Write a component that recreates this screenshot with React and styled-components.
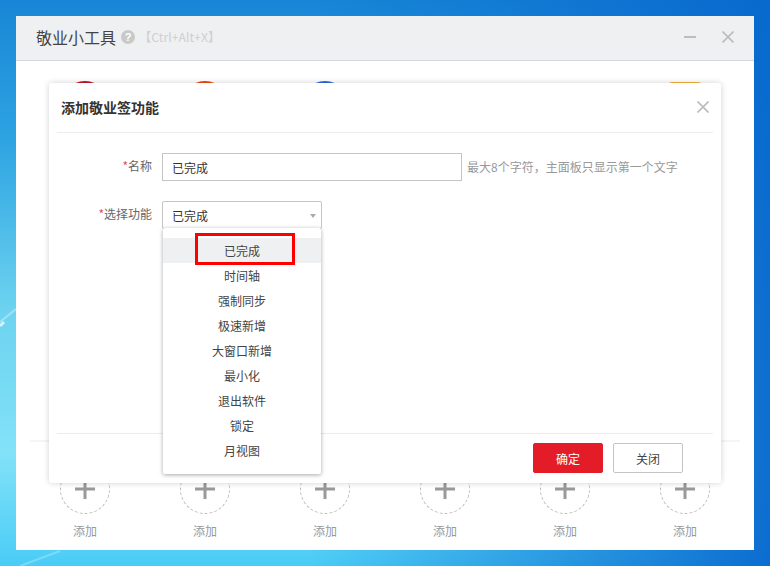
import styled, { createGlobalStyle } from "styled-components";

const GlobalStyle = createGlobalStyle`
  html, body {
    margin: 0;
    padding: 0;
    height: 100%;
    overflow: hidden;
  }
  body {
    font-family: "Noto Sans CJK SC", "Liberation Sans", sans-serif;
    font-size: 12px;
  }
`;

const Desktop = styled.div`
  position: relative;
  width: 770px;
  height: 566px;
  padding: 16px 0 0 16px;
  box-sizing: border-box;
  overflow: hidden;
  background:
    linear-gradient(90deg, rgba(10, 100, 200, 0) 0%, rgba(8, 104, 200, 0) 40%, rgba(8, 104, 206, 0.95) 100%),
    linear-gradient(180deg, #1886d6 0%, #2ea4e2 25%, #6dd3f0 55%, #82e2f8 80%, #4accf6 100%);
`;

const Streaks = styled.svg`
  position: absolute;
  left: 0;
  top: 0;
`;

const Window = styled.div`
  position: relative;
  width: 738px;
  height: 534px;
  display: flex;
  flex-direction: column;
  background: #fff;
`;

const TitleBar = styled.div`
  height: 45px;
  flex: none;
  box-sizing: border-box;
  display: flex;
  align-items: center;
  padding: 0 20px 2px;
  background: #eff0f2;
  border-bottom: 1px solid #d6d6dc;
`;

const AppTitle = styled.span`
  font-size: 16px;
  color: #444;
`;

const Help = styled.span`
  width: 14px;
  height: 14px;
  margin-left: 5px;
  border-radius: 50%;
  background: #c9c9c9;
  color: #fff;
  font-size: 11px;
  font-weight: 700;
  line-height: 14px;
  text-align: center;
  font-family: "Liberation Sans", sans-serif;
`;

const Shortcut = styled.span`
  margin-left: 4px;
  font-size: 12.3px;
  color: #cfcfcf;
`;

const WinControls = styled.div`
  margin-left: auto;
  display: flex;
  align-items: center;
  gap: 26px;
`;

const WinBody = styled.div`
  flex: 1;
  display: flex;
  flex-direction: column;
  padding-top: 20px;
`;

const SlotRow = styled.div`
  display: grid;
  grid-template-columns: repeat(6, 120px);
  padding-left: 9px;
`;

const ToolDot = styled.div`
  justify-self: center;
  width: ${(p) => p.$w || 50}px;
  height: 50px;
  margin-top: ${(p) => p.$top || 0}px;
  border-radius: ${(p) => p.$radius || "50%"};
  background: ${(p) => p.$color};
`;

const Rule = styled.div`
  margin: auto 14px 0;
  height: 2px;
  background: #f5f5f5;
`;

const AddSlots = styled(SlotRow)`
  padding-top: 22px;
  height: 86px;
  box-sizing: content-box;
`;

const AddSlot = styled.div`
  display: flex;
  flex-direction: column;
  align-items: center;
  gap: 9px;
`;

const AddCircle = styled.div`
  width: 50px;
  height: 50px;
  box-sizing: border-box;
  border-radius: 50%;
  border: 1px dashed #b9b9b9;
  display: flex;
  align-items: center;
  justify-content: center;
`;

const AddLabel = styled.span`
  font-size: 12px;
  line-height: 16px;
  color: #999;
`;

const Dialog = styled.div`
  position: absolute;
  left: 33px;
  top: 67px;
  width: 672px;
  height: 400px;
  box-sizing: border-box;
  padding: 0 8px;
  display: flex;
  flex-direction: column;
  background: #fff;
  border-radius: 3px;
  box-shadow: 0 0 6px rgba(0, 0, 0, 0.18);
`;

const DialogHead = styled.div`
  height: 50px;
  flex: none;
  box-sizing: border-box;
  padding: 0 4px 1px 4px;
  display: flex;
  align-items: center;
  justify-content: space-between;
  border-bottom: 1px solid #ececec;
`;

const DialogTitle = styled.h2`
  margin: 0;
  font-size: 14px;
  font-weight: 700;
  color: #333;
`;

const Form = styled.div`
  flex: 1;
  padding-top: 20px;
  display: flex;
  flex-direction: column;
  gap: 20px;
`;

const FormRow = styled.div`
  display: flex;
  align-items: flex-start;
`;

const Label = styled.label`
  width: 95px;
  flex: none;
  margin-right: 10px;
  text-align: right;
  font-size: 12px;
  line-height: 28px;
  color: #666;
  transform: translateY(-1px);

  i {
    font-style: normal;
    color: #d9534f;
  }
`;

const TextInput = styled.div`
  width: 300px;
  height: 28px;
  box-sizing: border-box;
  padding: 0 9px;
  border: 1px solid #c4c4c4;
  font-size: 12px;
  line-height: 27px;
  color: #333;
`;

const Hint = styled.span`
  margin-left: 5px;
  font-size: 12px;
  line-height: 28px;
  color: #999;
`;

const SelectWrap = styled.div`
  position: relative;
  width: 160px;
`;

const SelectBox = styled(TextInput)`
  width: 160px;
  border-radius: 2px;
  position: relative;

  &::after {
    content: "";
    position: absolute;
    right: 5px;
    top: 12px;
    border-left: 3px solid transparent;
    border-right: 3px solid transparent;
    border-top: 4px solid #aaa;
  }
`;

const Menu = styled.div`
  position: absolute;
  left: 1px;
  top: 27px;
  width: 158px;
  height: 246px;
  box-sizing: border-box;
  padding-top: 10px;
  background: #fff;
  border-radius: 2px;
  box-shadow: 0 1px 4px rgba(0, 0, 0, 0.35);
  z-index: 2;
`;

const MenuItem = styled.div`
  position: relative;
  height: 25px;
  line-height: 25px;
  text-align: center;
  font-size: 12px;
  color: #444;
  background: ${(p) => (p.$active ? "#eff0f2" : "transparent")};
`;

const Highlight = styled.div`
  position: absolute;
  left: 32px;
  top: -5px;
  width: 100px;
  height: 32px;
  box-sizing: border-box;
  border: 3px solid #f00;
`;

const DialogFoot = styled.div`
  height: 50px;
  flex: none;
  box-sizing: border-box;
  padding: 9px 30px 0 0;
  display: flex;
  justify-content: flex-end;
  align-items: flex-start;
  gap: 10px;
  border-top: 1px solid #ececec;
`;

const Button = styled.button`
  width: 70px;
  height: 30px;
  padding: 0;
  box-sizing: border-box;
  border-radius: 2px;
  font-family: inherit;
  font-size: 12px;
  border: 1px solid ${(p) => (p.$primary ? "#e41c27" : "#c4c4c4")};
  background: ${(p) => (p.$primary ? "#e41c27" : "#fff")};
  color: ${(p) => (p.$primary ? "#fff" : "#444")};
`;

const CrossIcon = ({ size = 12, color = "#bdbdbd" }) => (
  <svg width={size} height={size} viewBox="0 0 12 12" style={{ display: "block" }}>
    <path d="M0.5 0.5 L11.5 11.5 M11.5 0.5 L0.5 11.5" stroke={color} strokeWidth="1.7" fill="none" />
  </svg>
);

const MinusIcon = () => (
  <svg width="12" height="12" viewBox="0 0 12 12" style={{ display: "block" }}>
    <rect x="0" y="5" width="12" height="2" fill="#bdbdbd" />
  </svg>
);

const PlusIcon = () => (
  <svg width="20" height="20" viewBox="0 0 20 20" style={{ display: "block" }}>
    <path d="M0 8.5 H20 V11.5 H0 Z M8.5 0 H11.5 V20 H8.5 Z" fill="#999" />
  </svg>
);

const tools = [
  { color: "#c8142c" },
  { color: "#ef4a06" },
  { color: "#2b6be6" },
  { color: "transparent" },
  { color: "transparent" },
  { color: "#f6b437", w: 38, radius: "6px", top: 1 },
];

const options = ["已完成", "时间轴", "强制同步", "极速新增", "大窗口新增", "最小化", "退出软件", "锁定", "月视图"];

const App = () => {
  return (
    <Desktop>
      <GlobalStyle />
      <Streaks width="770" height="566">
        <path d="M0 322 L16 309" stroke="#fff" strokeOpacity="0.35" strokeWidth="2" />
        <path d="M0 326 L4 322" stroke="#fff" strokeOpacity="0.7" strokeWidth="3" />
        <path d="M20 566 L60 551" stroke="#fff" strokeOpacity="0.25" strokeWidth="2" />
      </Streaks>
      <Window>
        <TitleBar>
          <AppTitle>敬业小工具</AppTitle>
          <Help>?</Help>
          <Shortcut>【Ctrl+Alt+X】</Shortcut>
          <WinControls>
            <MinusIcon />
            <CrossIcon />
          </WinControls>
        </TitleBar>
        <WinBody>
          <SlotRow>
            {tools.map((t, i) => (
              <ToolDot key={i} $color={t.color} $w={t.w} $radius={t.radius} $top={t.top} />
            ))}
          </SlotRow>
          <Rule />
          <AddSlots>
            {tools.map((_, i) => (
              <AddSlot key={i}>
                <AddCircle>
                  <PlusIcon />
                </AddCircle>
                <AddLabel>添加</AddLabel>
              </AddSlot>
            ))}
          </AddSlots>
        </WinBody>
        <Dialog>
          <DialogHead>
            <DialogTitle>添加敬业签功能</DialogTitle>
            <CrossIcon />
          </DialogHead>
          <Form>
            <FormRow>
              <Label><i>*</i>名称</Label>
              <TextInput>已完成</TextInput>
              <Hint>最大8个字符，主面板只显示第一个文字</Hint>
            </FormRow>
            <FormRow>
              <Label><i>*</i>选择功能</Label>
              <SelectWrap>
                <SelectBox>已完成</SelectBox>
                <Menu>
                  {options.map((o, i) => (
                    <MenuItem key={o} $active={i === 0}>
                      {o}
                      {i === 0 && <Highlight />}
                    </MenuItem>
                  ))}
                </Menu>
              </SelectWrap>
            </FormRow>
          </Form>
          <DialogFoot>
            <Button $primary>确定</Button>
            <Button>关闭</Button>
          </DialogFoot>
        </Dialog>
      </Window>
    </Desktop>
  );
};

export default App;
